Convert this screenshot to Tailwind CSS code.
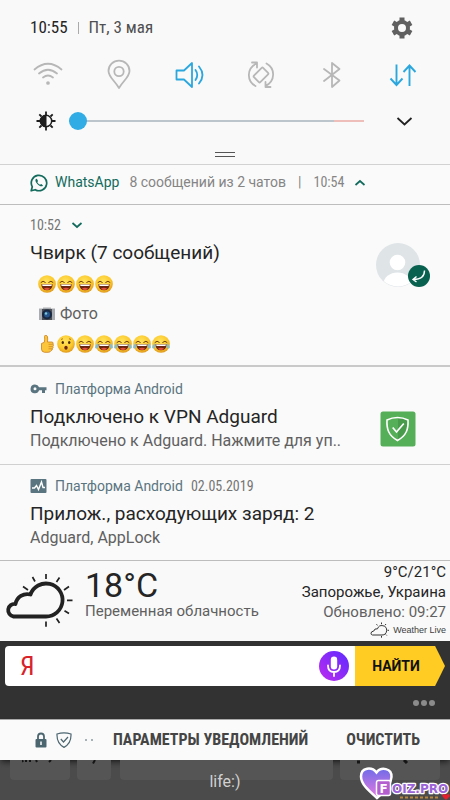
<!DOCTYPE html>
<html lang="ru">
<head>
<meta charset="utf-8">
<meta name="viewport" content="width=device-width, initial-scale=1">
<title>Уведомления</title>
<script src="https://cdn.jsdelivr.net/npm/@tailwindcss/browser@4"></script>
</head>
<body class="min-h-screen bg-[#4b4b4b] font-[Roboto,'Noto_Sans',sans-serif] text-[#252525]">

<!-- Shared symbols -->
<svg class="absolute size-0" aria-hidden="true">
  <defs>
    <radialGradient id="face" cx=".45" cy=".35" r=".65"><stop offset="0" stop-color="#ffe45c"/><stop offset=".65" stop-color="#fcc92d"/><stop offset="1" stop-color="#e19a1c"/></radialGradient>
    <linearGradient id="mic" x1="0" y1="1" x2="1" y2="0"><stop offset="0" stop-color="#c02bf0"/><stop offset="1" stop-color="#5a2bff"/></linearGradient>
    <linearGradient id="heart" x1="0" y1="0" x2="0" y2="1"><stop offset="0" stop-color="#6f6be8"/><stop offset="1" stop-color="#e77be0"/></linearGradient>
  </defs>
  <symbol id="smile" viewBox="0 0 18 18">
    <circle cx="9" cy="9" r="8.8" fill="url(#face)"/>
    <path d="M3 7.300Q5 5 7.300 7.300M10.700 7.300Q13 5 15 7.300" fill="none" stroke="#6a3b10" stroke-width="1" stroke-linecap="round"/>
    <path d="M3.300 9.300H14.700Q14.300 15.300 9 15.300T3.300 9.300Z" fill="#6b2510"/>
    <path d="M4 9.500H14L13.500 11H4.500Z" fill="#fff"/>
    <path d="M5.800 13.800Q9 11.800 12.200 13.800Q9 16.200 5.800 13.800Z" fill="#e5503c"/>
  </symbol>
  <symbol id="joy" viewBox="0 0 18 18">
    <use href="#smile"/>
    <path d="M3 8.300Q-.6 10.500.3 13Q2.800 14.500 3.500 11.500ZM15 8.300Q18.600 10.500 17.700 13Q15.200 14.500 14.500 11.500Z" fill="#8cbcc0"/>
  </symbol>
  <symbol id="wow" viewBox="0 0 18 18">
    <circle cx="9" cy="9" r="8.800" fill="url(#face)"/>
    <ellipse cx="5.800" cy="7.500" rx="1.200" ry="1.600" fill="#4a2c12"/><ellipse cx="12.200" cy="7.500" rx="1.200" ry="1.600" fill="#4a2c12"/>
    <path d="M4 4.500L6 3.700M14 4.500L12 3.700" stroke="#9c6418" stroke-width=".8"/>
    <ellipse cx="9" cy="12.700" rx="1.700" ry="2" fill="#6b2510"/>
  </symbol>
  <symbol id="thumb" viewBox="0 0 18 18">
    <path d="M3.500 8.500L6.300 7.300Q7 4 6.500 1.500Q6.600 0 8 .2Q10 .7 9.700 4L9.500 7H14Q15.700 7.300 15 9Q15.900 10.200 14.900 11.400Q15.500 12.800 14.400 13.700Q14.600 15.300 13 15.600Q12.500 17.300 10 17.300H6.500Q3.500 17 3.500 14Z" fill="#fcc63c" stroke="#c97f1d" stroke-width=".8"/>
    <path d="M10.500 9.300H14.700M10.500 11.600H14.500M10.500 13.800H14" stroke="#c97f1d" stroke-width=".7"/>
  </symbol>
</svg>

<main>
  <!-- Quick settings -->
  <header class="border-b border-[#d2d2d2] bg-[#f9f9f9]">
    <div class="flex h-14 items-center pl-[30px] pr-9 font-['Roboto_Condensed',Roboto,sans-serif] text-[17px]">
      <time>10:55</time>
      <span class="mx-[10px] h-3 w-px bg-[#aaa]"></span>
      <span class="grow text-[#505050]">Пт, 3 мая</span>
      <button aria-label="Настройки" class="text-[#606060]">
        <svg class="size-6" viewBox="0 0 24 24" fill="none" stroke="currentColor"><circle cx="12" cy="12" r="6" stroke-width="4"/><path d="M12 1.500v5M12 17.500v5M2.900 6.750l4.300 2.500M16.800 14.750l4.300 2.500M2.900 17.250l4.300-2.500M16.800 9.250l4.300-2.500" stroke-width="5"/></svg>
      </button>
    </div>
    <div class="mx-3 grid h-[38px] grid-cols-6 place-items-center text-[#b7b7b7]">
      <button aria-label="Wi-Fi"><svg class="size-8" viewBox="0 0 32 32" fill="none" stroke="currentColor" stroke-width="1.700" stroke-linecap="round"><path d="M2.500 10.500Q16-1 29.500 10.500M7 14.500Q16 7 25 14.500M11 18.500Q16 14.500 21 18.500"/><circle cx="16" cy="24" r="1" fill="currentColor"/></svg></button>
      <button aria-label="Геоданные"><svg class="size-8" viewBox="0 0 32 32" fill="none" stroke="currentColor" stroke-width="1.800"><path d="M16 29C12 22 5.500 18 5.500 12A10.500 10.300 0 0 1 26.500 12C26.500 18 20 22 16 29Z" stroke-linejoin="round"/><circle cx="16" cy="12.500" r="4.700"/></svg></button>
      <button aria-label="Звук" class="text-[#2ba7de]"><svg class="size-8" viewBox="0 0 32 32" fill="none" stroke="currentColor" stroke-width="1.800" stroke-linejoin="round" stroke-linecap="round"><path d="M2.500 11.500H10L18 4V28L10 20.500H2.500ZM21.500 11Q25 16 21.500 21M25 7.500Q32 16 25 24.500"/></svg></button>
      <button aria-label="Автоповорот"><svg class="size-8" viewBox="0 0 32 32" fill="none" stroke="currentColor" stroke-width="1.800" stroke-linejoin="round" stroke-linecap="round"><rect x="11.500" y="9.500" width="9" height="13" rx="1" transform="rotate(45 16 16)"/><path d="M10.500 27C1.500 22 1.500 9.500 11.500 4.500M7 3.500H12V8.500M21.500 4.500C30.500 9.500 30.500 22 20.500 27M25.500 28H20.500V23"/></svg></button>
      <button aria-label="Bluetooth"><svg class="size-8" viewBox="0 0 32 32" fill="none" stroke="currentColor" stroke-width="1.800" stroke-linejoin="round" stroke-linecap="round"><path d="M8 10L23.500 21.500L16 28V4L23.500 10L8 22"/></svg></button>
      <button aria-label="Мобильные данные" class="text-[#2ba7de]"><svg class="size-8" viewBox="0 0 32 32" fill="none" stroke="currentColor" stroke-width="1.900"><path d="M9.500 5.500V26M3.500 19.500L9.500 26L15.500 19.500M22.500 27V6.500M16.500 13L22.500 6.500L28.500 13"/></svg></button>
    </div>
    <div class="flex h-[54px] items-center px-9">
      <svg class="size-5 shrink-0 text-[#1d1d1d]" viewBox="0 0 20 20" aria-hidden="true" fill="none" stroke="currentColor"><circle cx="10" cy="10" r="5.700" stroke-width="1.500"/><path d="M10 4.500V15.500A5.500 5.500 0 0 1 10 4.500Z" fill="currentColor"/><path d="M10 .500V4M10 16v3.500M.500 10H4M16 10h3.500M3.300 3.300l2.200 2.200M14.500 14.500l2.200 2.200M3.300 16.700l2.200-2.200M14.500 5.500l2.200-2.200" stroke-width="1.800"/></svg>
      <input type="range" aria-label="Яркость" min="0" max="100" value="0" class="ml-[13px] mr-8 h-5 min-w-0 grow appearance-none bg-transparent [&::-webkit-slider-runnable-track]:h-[2px] [&::-webkit-slider-runnable-track]:bg-linear-to-r [&::-webkit-slider-runnable-track]:from-[#bcc5cb] [&::-webkit-slider-runnable-track]:from-90% [&::-webkit-slider-runnable-track]:to-[#eebfba] [&::-webkit-slider-runnable-track]:to-90% [&::-webkit-slider-thumb]:-mt-2 [&::-webkit-slider-thumb]:size-[18px] [&::-webkit-slider-thumb]:appearance-none [&::-webkit-slider-thumb]:rounded-full [&::-webkit-slider-thumb]:bg-[#31ace5]">
      <button aria-label="Развернуть"><svg class="h-5 w-[18px]" viewBox="0 0 18 20" fill="none" stroke="#222" stroke-width="1.800"><path d="M1.500 7L8.500 13.500L15.500 7"/></svg></button>
    </div>
    <div class="flex h-4 justify-center pt-1"><span class="h-[5px] w-5 border-y border-[#555]"></span></div>
  </header>

  <!-- WhatsApp -->
  <section class="flex h-10 items-center border-b border-[#bdbdbd] bg-[#fafafa] pb-1 pl-[30px] text-[14px] text-[#858585]">
    <svg class="size-[18px] shrink-0" viewBox="0 0 18 18" fill="none" stroke="#126b5c" stroke-width="1.700" aria-hidden="true"><path d="M1.200 16.800L2.300 12.800A7.700 7.700 0 1 1 5.200 15.700Z" stroke-linejoin="round"/><path d="M6.200 4.700C5 5.500 5 7.500 7.300 10C9.700 12.500 12 13 13 11.500L11.300 10L10 10.800Q8.200 10 7.300 8.200L8 7L7 4.900Z" fill="#126b5c" stroke="none"/></svg>
    <h2 class="ml-[7px] text-[#126b5c]">WhatsApp</h2>
    <span class="ml-[10px] whitespace-nowrap">8 сообщений из 2 чатов</span>
    <span class="ml-3">|</span>
    <time class="ml-3 font-['Roboto_Condensed',Roboto,sans-serif]">10:54</time>
    <button aria-label="Свернуть" class="ml-[10px]"><svg class="size-3" viewBox="0 0 12 12" fill="none" stroke="#126b5c" stroke-width="1.700"><path d="M1.500 8L6 4L10.500 8"/></svg></button>
  </section>
  <article class="flex border-b-2 border-[#c9c9c9] bg-[#fafafa] pl-[30px] pr-5 pt-3">
    <div class="grow pb-[6px]">
      <div class="flex h-4 items-center text-[14px] text-[#757575]"><time class="font-['Roboto_Condensed',Roboto,sans-serif]">10:52</time>
        <button aria-label="Развернуть сообщение" class="ml-[10px]"><svg class="size-3" viewBox="0 0 12 12" fill="none" stroke="#126b5c" stroke-width="1.700"><path d="M1.500 4L6 8L10.500 4"/></svg></button>
      </div>
      <h3 class="mt-2 text-[19px] leading-6">Чвирк (7 сообщений)</h3>
      <div class="mt-1 flex h-[30px] items-center gap-px pl-2" role="img" aria-label="Смех">
        <svg class="size-[18px]"><use href="#smile"/></svg><svg class="size-[18px]"><use href="#smile"/></svg><svg class="size-[18px]"><use href="#smile"/></svg><svg class="size-[18px]"><use href="#smile"/></svg>
      </div>
      <div class="flex h-[30px] items-center pl-2 text-[16px] text-[#606060]">
        <svg class="mr-1 size-[18px]" viewBox="0 0 18 18" aria-hidden="true"><path d="M1 3.500h4V2.500h8v1h4V15H1Z" fill="#a9adb2"/><path d="M4 4h10v11H4Z" fill="#4c4f55"/><circle cx="9" cy="9.500" r="5" fill="#182840"/><circle cx="9" cy="9.500" r="3" fill="#27548a"/><circle cx="8" cy="8.500" r="1.200" fill="#7ec9d6"/></svg>
        Фото
      </div>
      <div class="flex h-[30px] items-center gap-px pl-2" role="img" aria-label="Класс, удивление, смех до слёз">
        <svg class="size-[18px]"><use href="#thumb"/></svg><svg class="size-[18px]"><use href="#wow"/></svg><svg class="size-[18px]"><use href="#smile"/></svg><svg class="size-[18px]"><use href="#joy"/></svg><svg class="size-[18px]"><use href="#joy"/></svg><svg class="size-[18px]"><use href="#joy"/></svg><svg class="size-[18px]"><use href="#joy"/></svg>
      </div>
    </div>
    <svg class="mt-[26px] h-11 w-[54px] shrink-0" viewBox="0 0 54 44" role="img" aria-label="Чвирк">
      <clipPath id="av"><circle cx="22" cy="22" r="21.500"/></clipPath>
      <circle cx="22" cy="22" r="22" fill="#dfe4e7"/>
      <g clip-path="url(#av)" fill="#fff"><circle cx="21.500" cy="19.500" r="7.800"/><ellipse cx="21.500" cy="41" rx="14" ry="11.500"/></g>
      <circle cx="43" cy="33" r="11" fill="#08604f"/>
      <path d="M48.500 27.500C48.500 33 45 36.500 37.500 36.500M40.500 33.500L37 36.500L40.500 39" fill="none" stroke="#fff" stroke-width="1.400"/>
    </svg>
  </article>

  <!-- VPN -->
  <article class="flex border-b border-[#d0d0d0] bg-[#fafafa] pb-[13px] pl-[30px] pr-[34px] pt-3">
    <div class="min-w-0 grow">
      <div class="flex h-5 items-center gap-2 text-[14px] text-[#5a7580]">
        <svg class="h-4 w-[17px] shrink-0" viewBox="0 0 17 16" aria-hidden="true"><path d="M5 3.500A4.400 4.400 0 1 0 9.100 9.300H12V12H15V9.300H16.500V6.200H9.100A4.400 4.400 0 0 0 5 3.500ZM5 6.300A1.500 1.500 0 1 1 5 9.300A1.500 1.500 0 0 1 5 6.300Z" fill="currentColor" fill-rule="evenodd"/></svg>
        <h2>Платформа Android</h2>
      </div>
      <h3 class="mt-1 text-[19px] leading-7">Подключено к VPN Adguard</h3>
      <p class="whitespace-nowrap text-[16px] leading-5 text-[#606060]">Подключено к Adguard. Нажмите для уп..</p>
    </div>
    <svg class="mt-8 size-9 shrink-0" viewBox="0 0 36 36" role="img" aria-label="Adguard"><rect x=".500" y=".500" width="35" height="35" rx="2.500" fill="#55ae58"/><path d="M18 7Q23 7 28 9V17Q27 25 18 30Z" fill="#489b4b"/><path d="M17.500 6.500Q23 6.500 28 9C28.500 18 26.500 24.500 17.500 29.500C8.500 24.500 6.500 18 7 9Q12 6.500 17.500 6.500Z" fill="none" stroke="#fff" stroke-width="1.600"/><path d="M12.700 16.500L16.500 21L23.800 12.500" fill="none" stroke="#fff" stroke-width="1.700"/></svg>
  </article>

  <!-- Battery usage -->
  <article class="border-b border-[#bdbdbd] bg-[#fafafa] pb-3 pl-[30px] pt-[11px]">
    <div class="flex h-5 items-center gap-2 text-[14px] text-[#5a7580]">
      <svg class="h-4 w-[17px] shrink-0" viewBox="0 0 17 16" aria-hidden="true"><rect x=".500" y="1" width="16" height="14" rx="1" fill="currentColor"/><path d="M2 10H4.500L6.500 7.500L8.500 11.500L11.500 4L13 9.500H15" fill="none" stroke="#fff" stroke-width="1.400"/></svg>
      <h2>Платформа Android</h2>
      <time class="font-['Roboto_Condensed',Roboto,sans-serif] text-[#757575]">02.05.2019</time>
    </div>
    <h3 class="mt-1 text-[19px] leading-7">Прилож., расходующих заряд: 2</h3>
    <p class="text-[16px] leading-5 text-[#606060]">Adguard, AppLock</p>
  </article>

  <!-- Weather -->
  <section class="flex h-20 bg-[#f9f9f9] pl-[5px] pr-1">
    <svg class="mt-3 h-14 w-[68px] shrink-0 text-[#222]" viewBox="0 0 68 56" fill="none" stroke="currentColor" role="img" aria-label="Переменная облачность">
      <path d="M8.500 43.500H41A16.500 16.500 0 1 0 25.500 21.500A12 12 0 0 0 10.500 31A6.300 6.300 0 0 0 8.500 43.500Z" stroke-width="3.800" stroke-linejoin="round"/>
      <path d="M41 1v5M27.500 4l2.500 4.500M54.500 4.500l-3 4.500M18 13.500l5 3.500M64 13.500l-5 3.500M62 27.300h5.500M59.500 37.700l4.500 2.800M51.500 45.500l3 4.500M41 48.500v5.200" stroke-width="1.700"/>
    </svg>
    <div class="ml-3 grow">
      <p class="mt-1 text-[34px] leading-10">18°C</p>
      <p class="whitespace-nowrap text-[15px] leading-3 text-[#606060]">Переменная облачность</p>
    </div>
    <div class="whitespace-nowrap text-right text-[15px] leading-5">
      <p class="mt-px">9°C/21°C</p>
      <p>Запорожье, Украина</p>
      <p class="text-[#606060]">Обновлено: 09:27</p>
      <p class="flex items-center justify-end gap-1 font-['Liberation_Sans',sans-serif] text-[9px] leading-4 text-[#404040]">
        <svg class="h-4 w-[19px]" viewBox="0 0 19 16" fill="none" stroke="#333" stroke-width="1" aria-hidden="true"><path d="M2.500 13H12A4.700 4.700 0 1 0 7.500 6.800Q4.300 6.300 3.800 9Q1 9.500 1 11.200T2.500 13ZM11.500 .500V2.200M16 2L15 3.200M19 8.300H17.500M16.800 13.500l-1-1M11.500 14v1.700M6.500 2.200l.9 1.200"/></svg>
        Weather Live</p>
    </div>
  </section>

  <!-- Yandex search -->
  <section class="bg-[#323232] px-[5px] pt-[5px]">
    <form class="flex h-10" onsubmit="return false">
      <label class="flex min-w-0 grow items-center rounded-l-sm bg-white pl-[15px] pr-[6px]">
        <span class="font-['Roboto_Condensed',Roboto,sans-serif] text-[26px] text-[#d8232a]">Я</span>
        <input type="search" aria-label="Поиск в Яндексе" class="min-w-0 grow bg-transparent px-2 outline-none">
        <button type="button" aria-label="Голосовой поиск"><svg class="size-[30px]" viewBox="0 0 30 30"><circle cx="15" cy="15" r="15" fill="url(#mic)"/><rect x="11.800" y="5.500" width="6.400" height="13" rx="3.200" fill="#fff"/><path d="M9 14.500Q9 21 15 21T21 14.500M15 21v4" fill="none" stroke="#fff" stroke-width="1.800" stroke-linecap="round"/></svg></button>
      </label>
      <button class="w-[90px] shrink-0 bg-[#ffcc24] pr-2 text-[14px] font-bold text-[#111] [clip-path:polygon(0_0,89%_0,100%_50%,89%_100%,0_100%)]">НАЙТИ</button>
    </form>
    <div class="flex h-[33px] items-center justify-end pr-[10px]"><button aria-label="Ещё" class="flex gap-[2px]"><span class="size-[6px] rounded-full bg-[#8b8b8b]"></span><span class="size-[6px] rounded-full bg-[#8b8b8b]"></span><span class="size-[6px] rounded-full bg-[#8b8b8b]"></span></button></div>
  </section>

  <!-- Panel actions -->
  <nav class="relative flex h-[41px] items-center border-t border-[#aaa] bg-[#fafafa] pl-[35px] pr-[30px] font-['Roboto_Condensed',Roboto,sans-serif] text-[16px] font-bold text-[#454545] shadow-md shadow-black/40">
    <svg class="h-4 w-3 shrink-0" viewBox="0 0 12 16" aria-hidden="true"><path d="M3 8V4.500Q3 1.500 6 1.500T9 4.500V8" fill="none" stroke="#4c6670" stroke-width="1.800"/><rect x=".500" y="7" width="11" height="8.500" rx="1" fill="#4c6670"/><path d="M6 9.500v3.500" stroke="#fff" stroke-width="1.500"/></svg>
    <svg class="ml-[9px] size-4 shrink-0" viewBox="0 0 16 16" fill="none" stroke="#4c6670" stroke-width="1.200" aria-hidden="true"><path d="M8 .800Q11.500.800 15 2C15.300 8 13.500 12.500 8 15.400C2.500 12.500.700 8 1 2Q4.500.800 8 .800Z"/><path d="M4.800 7L7.500 10L12 5"/></svg>
    <span class="ml-[13px] flex gap-1"><i class="size-[2px] rounded-full bg-[#8b9aa0]"></i><i class="size-[2px] rounded-full bg-[#8b9aa0]"></i></span>
    <button class="ml-5 whitespace-nowrap">ПАРАМЕТРЫ УВЕДОМЛЕНИЙ</button>
    <button class="ml-auto">ОЧИСТИТЬ</button>
  </nav>

  <!-- Dimmed keyboard and carrier -->
  <footer class="relative h-10 overflow-hidden">
    <div class="flex h-5 gap-[7px] px-[10px]" aria-hidden="true">
      <span class="w-[60px] rounded-b bg-[#555]"><svg class="ml-3 h-1 w-8" viewBox="0 0 32 4"><path d="M0 0l1 2M4 0v2M8 0v2M14 0l1 2M29 0l-2 2" stroke="#151515" stroke-width="2"/></svg></span>
      <span class="w-[34px] rounded-b bg-[#555]"><svg class="mx-auto h-1 w-2" viewBox="0 0 8 4"><path d="M5 0L3 3.500" stroke="#151515" stroke-width="2"/></svg></span>
      <span class="ml-[2px] grow rounded-b bg-[#555]"></span>
      <span class="w-[100px] rounded-b bg-[#555]"><svg class="ml-4 h-1 w-14" viewBox="0 0 56 4"><path d="M1 2h3M48 0l3 3" stroke="#151515" stroke-width="3"/></svg></span>
    </div>
    <p class="-mt-2 text-center text-[16px] leading-5 text-[#d0d0d0]">life:)</p>
    <svg class="absolute bottom-0 right-0 h-[34px] w-[91px]" viewBox="0 0 91 34" role="img" aria-label="Foiz.pro">
      <path d="M41 31.500h38" stroke="#b8863e" stroke-width="2" stroke-dasharray="3 2"/>
      <path d="M18 32C9 24 2 18 2 10.500C2 1 13 .500 17.500 6.500C22 .500 33 2 32.500 11C32 19 27 25 18 32Z" fill="url(#heart)" stroke="#fff" stroke-width="2.500"/>
      <rect x="17.500" y="14.500" width="14" height="15" rx="2" fill="#b45fd0" stroke="#fff" stroke-width="1.500"/>
      <g font-family="DejaVu Sans, sans-serif" font-weight="bold" stroke-linejoin="round"><text x="20.500" y="26.500" font-size="12" fill="#fff">F</text><text x="33" y="26.500" font-size="12" fill="#9c63d8" stroke="#fff" stroke-width="2.500" paint-order="stroke">OIZ.PRO</text></g>
      <path d="M87 34L83.500 30.500Q83 28 85 28Q86.500 28 87 29.300Q88 28 89.500 28Q91 28.500 90.500 30.500Z" fill="#e9202b"/>
    </svg>
  </footer>
</main>
</body>
</html>
